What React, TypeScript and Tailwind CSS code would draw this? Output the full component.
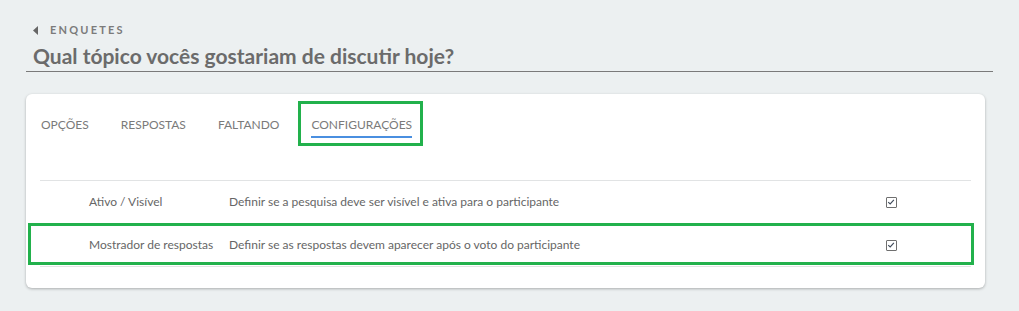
import React from 'react'

const tabs = ['OPÇÕES', 'RESPOSTAS', 'FALTANDO', 'CONFIGURAÇÕES']

const settings = [
  {
    label: 'Ativo / Visível',
    description: 'Definir se a pesquisa deve ser visível e ativa para o participante',
    highlighted: false,
  },
  {
    label: 'Mostrador de respostas',
    description: 'Definir se as respostas devem aparecer após o voto do participante',
    highlighted: true,
  },
]

function CheckBox() {
  return (
    <span className="flex h-[11px] w-[11px] items-center justify-center rounded-[1px] border border-[#6f6f6f] bg-white">
      <svg viewBox="0 0 10 10" className="h-[8px] w-[8px]" fill="none">
        <path d="M1.5 5.2 L4 7.5 L8.6 2.4" stroke="#3f4a5a" strokeWidth="1.4" />
      </svg>
    </span>
  )
}

export default function App() {
  const active = 'CONFIGURAÇÕES'

  return (
    <div className="min-h-[311px] bg-[#ecf0f1] px-[26px] pt-[23px] font-['Lato',_'Noto_Sans',_sans-serif]">
      <div className="border-b border-[#7a7a7a] pb-[2px]">
        <div className="flex items-center pl-[7px] text-[11px] font-bold leading-[14px] tracking-[0.2em] text-[#7b7b7b]">
          <svg viewBox="0 0 5 9" className="mr-[12px] h-[9px] w-[5px]">
            <path d="M5 0 L0 4.5 L5 9 Z" fill="#666" />
          </svg>
          ENQUETES
        </div>
        <h1 className="mt-[6px] pl-[7px] text-[21px] font-bold leading-[26px] text-[#6b6b6b]">
          Qual tópico vocês gostariam de discutir hoje?
        </h1>
      </div>

      <div className="mr-[8px] mt-[22px] rounded-[6px] bg-white px-[14px] pb-[21px] pt-[23px] shadow-[0_1px_3px_rgba(0,0,0,0.28)]">
        <div className="flex gap-[32px] pl-[1px]">
          {tabs.map((tab) => (
            <div key={tab} className="relative flex flex-col">
              <span className="text-[12px] leading-[16px] text-[#7a7a7a]">{tab}</span>
              <span
                className={
                  tab === active
                    ? 'mt-[3px] h-[2px] bg-[#4a8fe0]'
                    : 'mt-[3px] h-[2px] bg-transparent'
                }
              />
              {tab === active && (
                <div className="pointer-events-none absolute -bottom-[8px] -left-[13px] -right-[11px] -top-[16px] border-[3px] border-[#22b14c]" />
              )}
            </div>
          ))}
        </div>

        <div className="mt-[42px] border-t border-[#e1e3e4]">
          {settings.map((row) => (
            <div
              key={row.label}
              className="relative grid h-[43px] grid-cols-[49px_140px_1fr_150px] items-center border-b border-[#e1e3e4] text-[12px] text-[#666]"
            >
              <span />
              <span>{row.label}</span>
              <span>{row.description}</span>
              <span className="flex justify-center pr-[10px]">
                <CheckBox />
              </span>
              {row.highlighted && (
                <div className="pointer-events-none absolute -left-[12px] -right-[3px] -top-[1px] bottom-[1px] border-[3px] border-[#22b14c]" />
              )}
            </div>
          ))}
        </div>
      </div>
    </div>
  )
}
